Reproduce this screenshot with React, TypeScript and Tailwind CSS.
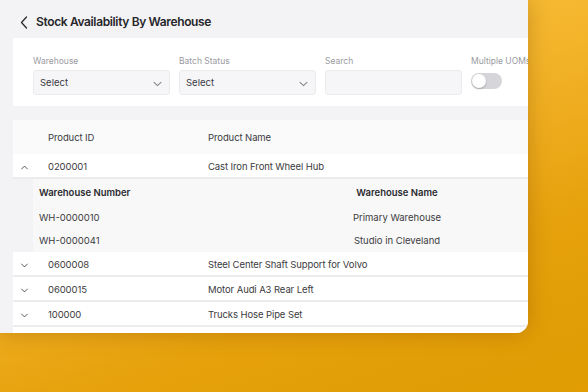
import React from "react";

const Chevron = ({ dir = "down", className = "" }: { dir?: "down" | "up" | "left"; className?: string }) => {
  const d =
    dir === "down" ? "M1 1.5 L5 5.5 L9 1.5" : dir === "up" ? "M1 5.5 L5 1.5 L9 5.5" : "M6.5 1 L1.5 6.5 L6.5 12";
  const vb = dir === "left" ? "0 0 8 13" : "0 0 10 7";
  return (
    <svg viewBox={vb} className={className} fill="none" stroke="currentColor" strokeWidth={1.3} strokeLinecap="round" strokeLinejoin="round">
      <path d={d} />
    </svg>
  );
};

const SelectBox = ({ label, value, chevron = true }: { label: string; value?: string; chevron?: boolean }) => (
  <div className="flex w-[137px] shrink-0 flex-col">
    <div className="h-[13px] text-[8.5px] leading-[13px] text-[#9a9a9f] whitespace-nowrap">{label}</div>
    <div className="mt-[2px] flex h-[25px] items-center justify-between rounded-[3px] border border-[#ebebee] bg-[#f6f6f8] pl-[6px] pr-[7px] pt-[2px]">
      <span className="text-[9.5px] text-[#3a3a3f]">{value}</span>
      {chevron && <Chevron dir="down" className="h-[6px] w-[9px] text-[#8a8a90]" />}
    </div>
  </div>
);

const Row = ({ id, name, open = false }: { id: string; name: string; open?: boolean }) => (
  <div className="flex h-[25px] items-center border-b-2 border-[#ececee] bg-white pt-[3px] text-[9.5px] tracking-[-0.01em] text-[#3b3b40]">
    <div className="flex w-[35px] shrink-0 justify-start pl-[7px]">
      <Chevron dir={open ? "up" : "down"} className="h-[5px] w-[9px] text-[#4a4a50]" />
    </div>
    <div className="w-[160px] shrink-0">{id}</div>
    <div className="whitespace-nowrap">{name}</div>
  </div>
);

export default function App() {
  return (
    <div
      className="relative h-[392px] w-[588px] overflow-hidden bg-[linear-gradient(160deg,#fcc747_0%,#f4b52c_40%,#e6a10c_70%,#e09c02_100%)]"
      style={{ fontFamily: "Inter, 'Noto Sans', sans-serif" }}
    >
      <div className="h-[333px] w-[528px] overflow-hidden rounded-br-[12px] bg-[#f3f3f5] shadow-[0_0_22px_rgba(120,70,0,0.35)]">
        {/* header */}
        <div className="flex h-[38px] items-center pl-[20px] pt-[6px]">
          <Chevron dir="left" className="h-[13px] w-[8px] text-[#2a2a30]" />
          <span className="ml-[8px] text-[12px] font-semibold tracking-[-0.03em] text-[#26262b] whitespace-nowrap">
            Stock Availability By Warehouse
          </span>
        </div>

        {/* filters */}
        <div className="ml-[13px] flex h-[68px] gap-[9px] bg-white pl-[20px] pt-[17px]">
          <SelectBox label="Warehouse" value="Select" />
          <SelectBox label="Batch Status" value="Select" />
          <SelectBox label="Search" chevron={false} />
          <div className="flex w-[80px] shrink-0 flex-col">
            <div className="h-[13px] text-[8.5px] leading-[13px] text-[#9a9a9f] whitespace-nowrap">Multiple UOMs</div>
            <div className="mt-[5px] flex h-[16px] w-[31px] items-center rounded-full bg-[#d6d6da] pl-[1px]">
              <div className="h-[14px] w-[14px] rounded-full bg-white shadow-[0_1px_2px_rgba(0,0,0,0.25)]" />
            </div>
          </div>
        </div>

        {/* table */}
        <div className="ml-[13px] mt-[14px]">
          <div className="flex h-[34px] items-center bg-[#fafafb] pt-[2px] text-[9.5px] tracking-[-0.01em] text-[#3b3b40]">
            <div className="w-[35px] shrink-0" />
            <div className="w-[160px] shrink-0">Product ID</div>
            <div>Product Name</div>
          </div>
          <Row id="0200001" name="Cast Iron Front Wheel Hub" open />
          <div className="h-[73px] bg-[#f3f3f5] pl-[20px]">
            <div className="h-full bg-[#f8f8f9] text-[9.5px] text-[#3b3b40]">
              <div className="flex h-[27px] items-center pt-[2px] font-semibold text-[#2a2a2f]">
                <div className="w-[304px] shrink-0 pl-[6px]">Warehouse Number</div>
                <div className="w-[120px] text-center">Warehouse Name</div>
              </div>
              <div className="flex h-[23px] items-center pt-[1px]">
                <div className="w-[304px] shrink-0 pl-[6px]">WH-0000010</div>
                <div className="w-[120px] text-center">Primary Warehouse</div>
              </div>
              <div className="flex h-[23px] items-center pt-[1px]">
                <div className="w-[304px] shrink-0 pl-[6px]">WH-0000041</div>
                <div className="w-[120px] text-center">Studio in Cleveland</div>
              </div>
            </div>
          </div>
          <Row id="0600008" name="Steel Center Shaft Support for Volvo" />
          <Row id="0600015" name="Motor Audi A3 Rear Left" />
          <Row id="100000" name="Trucks Hose Pipe Set" />
          <div className="h-[25px] bg-white" />
        </div>
      </div>
    </div>
  );
}
